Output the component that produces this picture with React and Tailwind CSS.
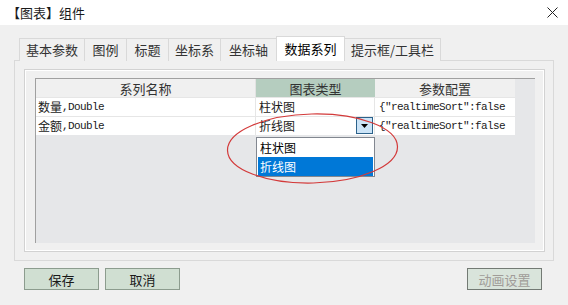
import React from "react";

const tabs = [
  { label: "基本参数", w: "w-[66px]" },
  { label: "图例", w: "w-[43px]" },
  { label: "标题", w: "w-[43px]" },
  { label: "坐标系", w: "w-[53px]" },
  { label: "坐标轴", w: "w-[57px]" },
  { label: "数据系列", w: "w-[69px]", active: true },
  { label: "提示框/工具栏", w: "w-[97px]" },
];

const rows = [
  { name: "数量", type: "柱状图" },
  { name: "金额", type: "折线图", open: true },
];

function Mono({ children }) {
  return (
    <span className="font-['Liberation_Mono',monospace] text-[11px] tracking-[-0.6px]">
      {children}
    </span>
  );
}

export default function App() {
  return (
    <div className="relative h-[305px] w-[568px] overflow-hidden bg-[#f0f0f0] font-['Noto_Sans_CJK_SC',sans-serif] text-[#1a1a1a]">
      {/* Title bar */}
      <div className="flex h-[25px] items-center justify-between bg-white pl-[7px] pr-[10px]">
        <span className="text-[13px] leading-none">【图表】组件</span>
        <svg width="11" height="11" viewBox="0 0 11 11" className="mb-[1px]">
          <path d="M0.5 0.5 L10.5 10.5 M10.5 0.5 L0.5 10.5" stroke="#222" strokeWidth="1" />
        </svg>
      </div>

      {/* Tabs */}
      <div className="mt-[11px] flex h-[25px] items-end pl-[19px]">
        {tabs.map((t, i) => (
          <div
            key={t.label}
            className={`flex items-center justify-center border-x border-t border-[#d9d9d9] text-[13px] leading-none ${t.w} ${
              i > 0 ? "-ml-px" : ""
            } ${
              t.active
                ? "relative z-10 h-[25px] bg-white pb-[2px] text-black"
                : "h-[23px] bg-[#f0f0f0] pb-[1px] text-[#333]"
            }`}
          >
            {t.label}
          </div>
        ))}
      </div>

      {/* Tab panel */}
      <div className="mx-[14px] -mt-px h-[201px] border border-[#d9d9d9] pl-[9px] pr-[8px] pt-[8px]">
        <div className="h-[183px] border border-[#d2d2d2]">
          <div className="h-full border border-white pb-[7px] pl-[9px] pr-[8px] pt-[7px]">
            {/* Grid area */}
            <div className="relative h-full border-l border-t border-[#a0a0a0] bg-[#e6e7e9]">
              {/* Header */}
              <div className="flex h-[18px] text-[13px] leading-none text-[#333]">
                <div className="flex w-[220px] items-center justify-center border-r border-[#e2e2e2] bg-[#f0f0f0]">
                  系列名称
                </div>
                <div className="flex w-[119px] items-center justify-center bg-[#b5cdbf]">
                  图表类型
                </div>
                <div className="flex w-[140px] items-center justify-center bg-[#f0f0f0]">
                  参数配置
                </div>
              </div>

              {/* Rows */}
              {rows.map((r) => (
                <div
                  key={r.name}
                  className="flex h-[19px] w-[479px] border-t border-[#e6e6e6] bg-white text-[12px] leading-none"
                >
                  <div className="flex w-[220px] items-center border-r border-[#e6e6e6] pl-[2px]">
                    {r.name}
                    <Mono>,Double</Mono>
                  </div>
                  <div className="relative flex w-[119px] items-center border-r border-[#e6e6e6] pl-[3px]">
                    {r.type}
                    {r.open && (
                      <div className="absolute right-[1px] top-0 flex h-[17px] w-[17px] items-center justify-center border border-[#2c628b] bg-[#cce4f7]">
                        <svg width="7" height="4" viewBox="0 0 7 4">
                          <path d="M0 0 L7 0 L3.5 4 Z" fill="#000" />
                        </svg>
                      </div>
                    )}
                  </div>
                  <div className="flex w-[140px] items-center overflow-hidden whitespace-nowrap pl-[4px]">
                    <Mono>{'{"realtimeSort":false'}</Mono>
                  </div>
                </div>
              ))}

              {/* Dropdown list */}
              <div className="absolute left-[220px] top-[58px] z-10 h-[40px] w-[119px] border border-[#828790] bg-white p-px text-[12px] leading-none">
                <div className="flex h-[18px] items-center pl-[2px] text-black">柱状图</div>
                <div className="flex h-[19px] items-center bg-[#0078d7] pl-[2px] text-white">折线图</div>
              </div>
            </div>
          </div>
        </div>
      </div>

      {/* Annotation ellipse */}
      <svg
        className="pointer-events-none absolute left-[225px] top-[112px] z-20"
        width="176"
        height="74"
      >
        <ellipse
          cx="87.5"
          cy="36.5"
          rx="85"
          ry="34.5"
          fill="none"
          stroke="#d33a3a"
          strokeWidth="1.2"
          transform="rotate(-1.3 87.5 36.5)"
        />
      </svg>

      {/* Buttons */}
      <div className="mt-[7px] flex pl-[24px] pr-[26px] text-[13px] leading-none">
        <button className="flex h-[22px] w-[75px] items-center justify-center border border-[#8c9c8e] bg-[#d0dfd2] text-[#1a1a1a]">
          保存
        </button>
        <button className="ml-[6px] flex h-[22px] w-[75px] items-center justify-center border border-[#8c9c8e] bg-[#d0dfd2] text-[#1a1a1a]">
          取消
        </button>
        <div className="flex-1" />
        <button
          disabled
          className="flex h-[22px] w-[75px] items-center justify-center border border-[#737a74] bg-[#d9e4db] text-[#a09c98]"
        >
          动画设置
        </button>
      </div>
    </div>
  );
}
